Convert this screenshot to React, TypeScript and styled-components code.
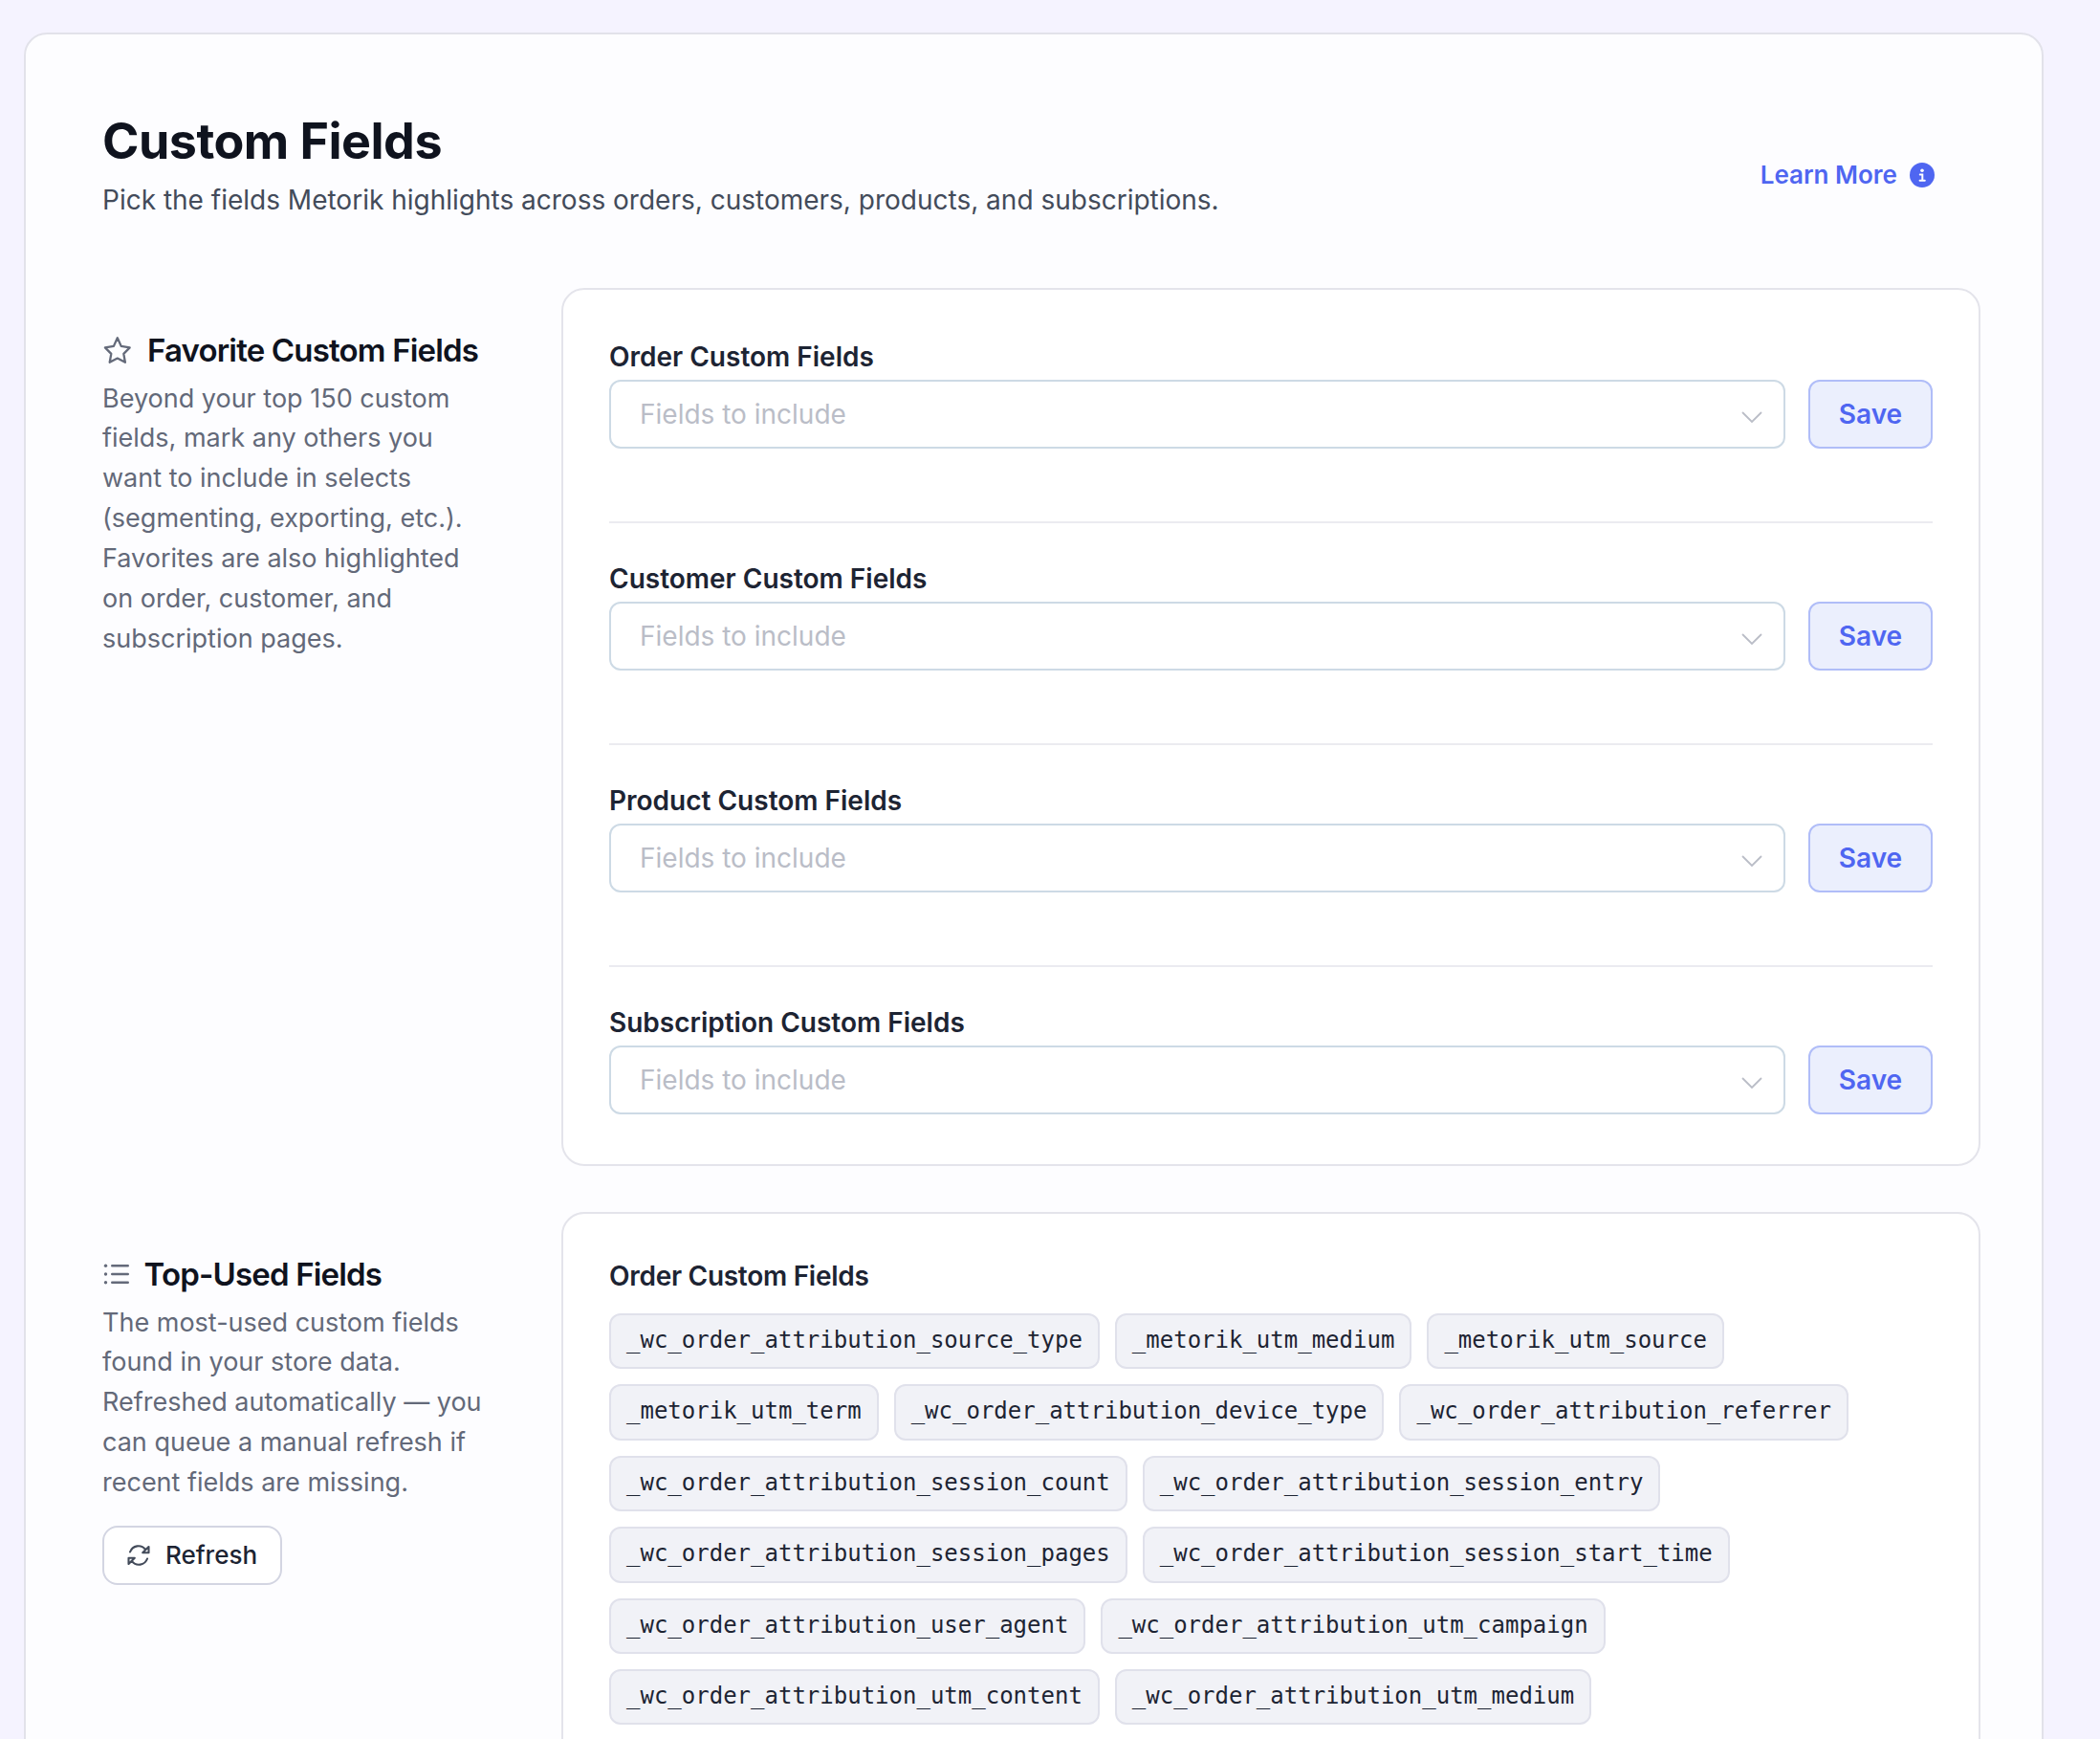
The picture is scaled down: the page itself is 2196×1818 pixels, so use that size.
import React from "react";
import styled, { createGlobalStyle } from "styled-components";

const Global = createGlobalStyle`
  *, *::before, *::after { box-sizing: border-box; }
  body {
    margin: 0;
    background: #f5f3ff;
    font-family: Inter, "Liberation Sans", sans-serif;
  }
  h1, h2, h3, p { margin: 0; }
`;

const Page = styled.div`
  height: 1818px;
  padding: 34px 59px 0 25px;
  overflow: hidden;
`;

const Panel = styled.main`
  height: 1900px;
  padding: 79px 64px 0 80px;
  background: #fdfdff;
  border: 2px solid #e2e2ea;
  border-radius: 24px;
`;

const Header = styled.header`
  display: flex;
  align-items: flex-start;
  justify-content: space-between;
  height: 124px;
  margin-bottom: 62px;
  padding-right: 48px;
`;

const Title = styled.h1`
  font-size: 52px;
  line-height: 66px;
  font-weight: 700;
  letter-spacing: -0.01em;
  color: #0f131e;
`;

const Subtitle = styled.p`
  font-size: 28px;
  line-height: 57px;
  color: #434b5a;
  white-space: nowrap;
`;

const LearnMore = styled.a`
  display: flex;
  align-items: center;
  gap: 13px;
  margin-top: 51.5px;
  font-size: 26px;
  line-height: 32px;
  font-weight: 600;
  color: #4f66f1;
`;

const Section = styled.section`
  display: grid;
  grid-template-columns: 480px 1fr;
  margin-bottom: 48px;
`;

const Aside = styled.aside`
  padding-top: 48px;
`;

const SectionTitle = styled.h2<{ $gap: number }>`
  display: flex;
  align-items: center;
  gap: ${(p) => p.$gap}px;
  height: 34px;
  margin-bottom: 12.6px;
  font-size: 33px;
  font-weight: 600;
  letter-spacing: -0.025em;
  color: #0f131e;
  white-space: nowrap;

  svg { color: #646a7a; flex: none; }
`;

const Description = styled.p`
  width: 410px;
  font-size: 27px;
  line-height: 41.85px;
  color: #636979;
`;

const RefreshButton = styled.button`
  display: flex;
  align-items: center;
  justify-content: center;
  gap: 16px;
  width: 188px;
  height: 62px;
  margin-top: 24px;
  padding: 0;
  font: 500 26px Inter, sans-serif;
  color: #1d2433;
  background: #fff;
  border: 2px solid #d3d5e2;
  border-radius: 16px;

  svg { color: #434b5a; }
`;

const Card = styled.div<{ $height: number }>`
  height: ${(p) => p.$height}px;
  padding: 50px 48px;
  background: #fff;
  border: 2px solid #e4e4eb;
  border-radius: 24px;
`;

const Field = styled.div`
  height: 232px;

  & + & {
    height: 272px;
    margin-top: -40px;
    padding-top: 38px;
    border-top: 2px solid #ebebf0;
  }
`;

const FieldLabel = styled.h3`
  height: 44px;
  font-size: 28px;
  line-height: 40px;
  font-weight: 600;
  color: #1d2433;
`;

const FieldRow = styled.div`
  display: grid;
  grid-template-columns: 1fr 130px;
  gap: 24px;
`;

const Select = styled.div`
  display: flex;
  align-items: center;
  justify-content: space-between;
  height: 72px;
  padding: 0 22px 0 30px;
  font-size: 28px;
  color: #babdc7;
  border: 2px solid #cddae5;
  border-radius: 12px;

  svg { margin-top: 7px; }
`;

const SaveButton = styled.button`
  height: 72px;
  padding: 0;
  font: 600 28px Inter, sans-serif;
  color: #4f66f1;
  background: #ebeffd;
  border: 2px solid #b0bdf8;
  border-radius: 12px;
`;

const ChipTitle = styled(FieldLabel)`
  height: 54px;
  line-height: 31px;
  letter-spacing: -0.01em;
`;

const Chips = styled.div`
  display: flex;
  flex-wrap: wrap;
  gap: 16px;
`;

const Chip = styled.code`
  height: 58.4px;
  padding: 0 16px;
  font: 24px/52px "DejaVu Sans Mono", monospace;
  color: #1d2433;
  background: #f1f2f7;
  border: 2px solid #e0e1eb;
  border-radius: 12px;
  white-space: nowrap;
`;

const InfoIcon = () => (
  <svg width="26" height="26" viewBox="0 0 26 26">
    <circle cx="13" cy="13" r="13" fill="currentColor" />
    <circle cx="13" cy="8.2" r="1.8" fill="#fff" />
    <path d="M10.8 12.4h2.5v6M10.6 18.7h5.2" fill="none" stroke="#fff" strokeWidth="2" strokeLinecap="round" />
  </svg>
);

const StarIcon = () => (
  <svg width="31" height="30" viewBox="0 0 31 30" fill="none" stroke="currentColor" strokeWidth="2.3" strokeLinejoin="round">
    <path d="M15.8 2.3L19.7 10.9L28.7 12.4L22.3 18.9L23.9 27.8L15.8 23.6L7.7 27.8L9.3 18.9L2.9 12.4L11.9 10.9Z" />
  </svg>
);

const ListIcon = () => (
  <svg width="28" height="24" viewBox="0 0 28 24" fill="none" stroke="currentColor" strokeWidth="2.4" strokeLinecap="round">
    <path d="M10.2 3.2H26.8M10.2 12H26.8M10.2 20.8H26.8" />
    <g fill="currentColor" stroke="none">
      <circle cx="3.5" cy="3.2" r="1.7" />
      <circle cx="3.5" cy="12" r="1.7" />
      <circle cx="3.5" cy="20.8" r="1.7" />
    </g>
  </svg>
);

const RefreshIcon = () => (
  <svg width="24" height="22" viewBox="0 0 24 22" fill="none" stroke="currentColor" strokeWidth="2.1" strokeLinecap="round" strokeLinejoin="round">
    <path d="M3 7.5C5.5 0.5 14.5 -1 19 4.8M22.5 2v6.3h-6.3z" />
    <path d="M21 14.5C18.5 21.5 9.5 23 5 17.2M1.5 20v-6.3h6.3z" />
  </svg>
);

const ChevronIcon = () => (
  <svg width="22" height="13" viewBox="0 0 22 13" fill="none" stroke="#babdc7" strokeWidth="1.8" strokeLinecap="round">
    <path d="M1.5 1.5l9.5 9.5L20.5 1.5" />
  </svg>
);

const fields = [
  "Order Custom Fields",
  "Customer Custom Fields",
  "Product Custom Fields",
  "Subscription Custom Fields",
];

const topFields = [
  "_wc_order_attribution_source_type",
  "_metorik_utm_medium",
  "_metorik_utm_source",
  "_metorik_utm_term",
  "_wc_order_attribution_device_type",
  "_wc_order_attribution_referrer",
  "_wc_order_attribution_session_count",
  "_wc_order_attribution_session_entry",
  "_wc_order_attribution_session_pages",
  "_wc_order_attribution_session_start_time",
  "_wc_order_attribution_user_agent",
  "_wc_order_attribution_utm_campaign",
  "_wc_order_attribution_utm_content",
  "_wc_order_attribution_utm_medium",
];

export default function App() {
  return (
    <Page>
      <Global />
      <Panel>
        <Header>
          <div>
            <Title>Custom Fields</Title>
            <Subtitle>Pick the fields Metorik highlights across orders, customers, products, and subscriptions.</Subtitle>
          </div>
          <LearnMore>
            Learn More
            <InfoIcon />
          </LearnMore>
        </Header>

        <Section>
          <Aside>
            <SectionTitle $gap={16}>
              <StarIcon />
              Favorite Custom Fields
            </SectionTitle>
            <Description>
              Beyond your top 150 custom fields, mark any others you want to include in selects (segmenting, exporting, etc.).
              Favorites are also highlighted on order, customer, and subscription pages.
            </Description>
          </Aside>
          <Card $height={918}>
            {fields.map((label) => (
              <Field key={label}>
                <FieldLabel>{label}</FieldLabel>
                <FieldRow>
                  <Select>
                    Fields to include
                    <ChevronIcon />
                  </Select>
                  <SaveButton>Save</SaveButton>
                </FieldRow>
              </Field>
            ))}
          </Card>
        </Section>

        <Section>
          <Aside>
            <SectionTitle $gap={15.5}>
              <ListIcon />
              Top-Used Fields
            </SectionTitle>
            <Description>
              The most-used custom fields found in your store data. Refreshed automatically — you can queue a manual refresh if
              recent fields are missing.
            </Description>
            <RefreshButton>
              <RefreshIcon />
              Refresh
            </RefreshButton>
          </Aside>
          <Card $height={700}>
            <ChipTitle>Order Custom Fields</ChipTitle>
            <Chips>
              {topFields.map((name) => (
                <Chip key={name}>{name}</Chip>
              ))}
            </Chips>
          </Card>
        </Section>
      </Panel>
    </Page>
  );
}
